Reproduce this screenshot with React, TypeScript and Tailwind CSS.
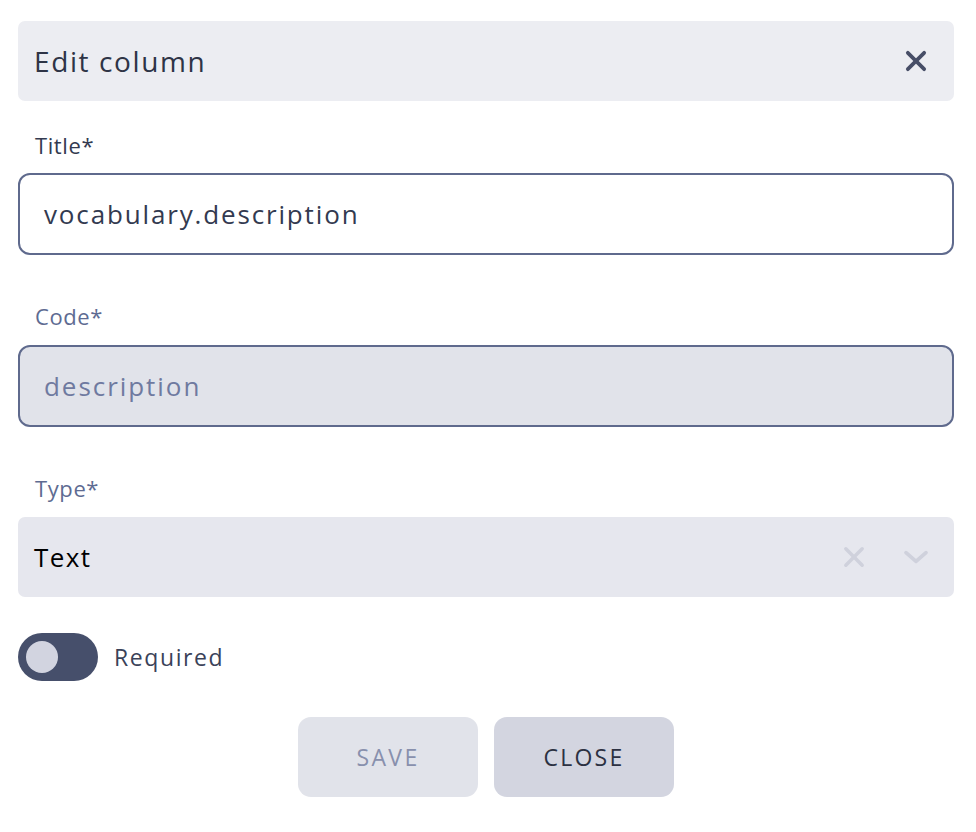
import React from "react";

const font = { fontFamily: '"Open Sans", "Noto Sans", sans-serif' };

function XIcon({ className, sw = 3 }: { className?: string; sw?: number }) {
  return (
    <svg viewBox="0 0 24 24" className={className} fill="none" stroke="currentColor" strokeWidth={sw} strokeLinecap="round">
      <path d="M5 5 L19 19 M19 5 L5 19" />
    </svg>
  );
}

function Chevron({ className }: { className?: string }) {
  return (
    <svg viewBox="0 0 24 24" className={className} fill="none" stroke="currentColor" strokeWidth={3} strokeLinecap="round" strokeLinejoin="round">
      <path d="M4 8.5 L12 15.5 L20 8.5" />
    </svg>
  );
}

export default function App() {
  return (
    <div className="w-[976px] h-[832px] bg-white pt-[21px] pl-[18px] pr-[22px]" style={font}>
      <div className="h-[80px] rounded-[7px] bg-[#ecedf2] flex items-center justify-between pl-[16px] pr-[24px]">
        <span className="text-[28px] font-medium tracking-[1.6px] text-[#2e3446]">Edit column</span>
        <XIcon className="w-[28px] h-[28px] text-[#474e67]" sw={3.2} />
      </div>

      <div className="mt-[30px] h-[28px] flex items-center pl-[17px] text-[22px] font-medium tracking-[0.6px] text-[#333a50]">Title*</div>
      <div className="mt-[14px] h-[82px] rounded-[12px] border-2 border-[#5f6a8d] bg-white flex items-center pl-[24px] text-[26px] tracking-[1.85px] text-[#333a50]">
        vocabulary.description
      </div>

      <div className="mt-[47px] h-[28px] flex items-center pl-[17px] text-[22px] font-medium tracking-[0.6px] text-[#5e6b92]">Code*</div>
      <div className="mt-[15px] h-[82px] rounded-[12px] border-2 border-[#5f6a8d] bg-[#e1e3ea] flex items-center pl-[24px] text-[26px] tracking-[1.95px] text-[#6f7aa0]">
        description
      </div>

      <div className="mt-[47px] h-[28px] flex items-center pl-[17px] text-[22px] font-medium tracking-[0.6px] text-[#5e6b92]">Type*</div>
      <div className="mt-[15px] h-[80px] rounded-[7px] bg-[#e6e7ee] flex items-center pl-[16px] pr-[23px]">
        <span className="flex-1 text-[26px] tracking-[1.4px] text-black">Text</span>
        <XIcon className="w-[28px] h-[28px] text-[#cfd1dc]" />
        <Chevron className="ml-[33px] w-[30px] h-[30px] text-[#cfd1dc]" />
      </div>

      <div className="mt-[36px] h-[48px] flex items-center">
        <div className="w-[80px] h-[48px] rounded-full bg-[#464f6b] flex items-center pl-[8px]">
          <div className="w-[32px] h-[32px] rounded-full bg-[#d2d4e0]" />
        </div>
        <span className="ml-[16px] text-[23px] font-medium tracking-[1.6px] text-[#3a4259]">Required</span>
      </div>

      <div className="mt-[36px] flex justify-center gap-[16px]">
        <div className="w-[180px] h-[80px] rounded-[13px] bg-[#e1e3ea] flex items-center justify-center text-[23px] font-medium tracking-[2.4px] text-[#8890ad]">
          SAVE
        </div>
        <div className="w-[180px] h-[80px] rounded-[13px] bg-[#d3d5e0] flex items-center justify-center text-[23px] font-medium tracking-[2.2px] text-[#2c3142]">
          CLOSE
        </div>
      </div>
    </div>
  );
}
